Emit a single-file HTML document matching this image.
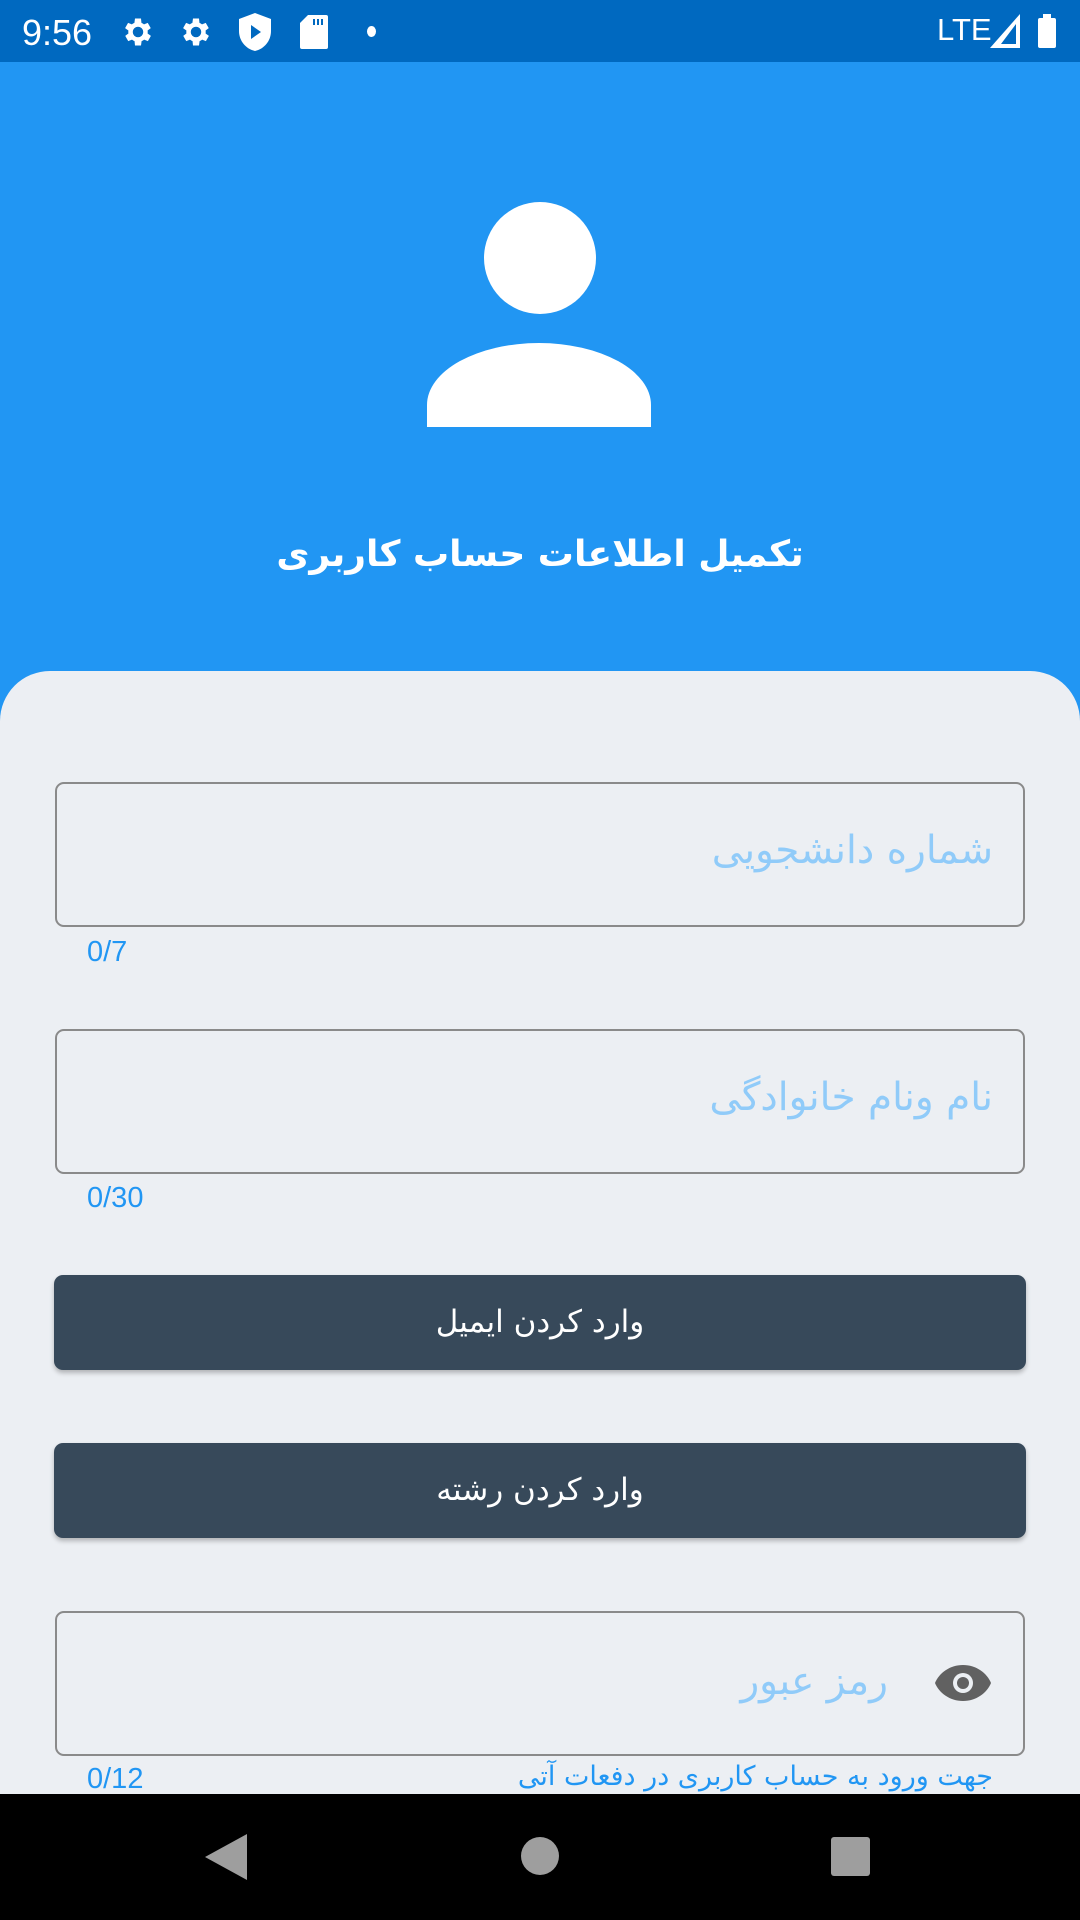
<!DOCTYPE html>
<html><head><meta charset="utf-8"><style>
*{margin:0;padding:0;box-sizing:border-box}
body{width:1080px;height:1920px;position:relative;overflow:hidden;background:#2196f3;font-family:"Liberation Sans","DejaVu Sans",sans-serif}
.abs{position:absolute}
.sb{left:0;top:0;width:1080px;height:62px;background:#0069c0;color:#fff}
.panel{left:0;top:671px;width:1080px;height:1123px;background:#eceff3;border-radius:50px 50px 0 0}
.field{left:55px;width:970px;height:145px;border:2.5px solid #8a8a8a;border-radius:9px}
.ph{right:30px;color:#90cbf9;font-size:39px;direction:rtl;font-family:"DejaVu Sans",sans-serif}
.cnt{left:87px;color:#2196f3;font-size:29px}
.btn{left:54px;width:972px;height:95px;background:#37495a;border-radius:9px;box-shadow:0 3px 5px rgba(0,0,0,.25);color:#fff;font-size:31px;text-align:center;line-height:95px;direction:rtl;font-family:"DejaVu Sans",sans-serif}
.nav{left:0;top:1794px;width:1080px;height:126px;background:#000}
</style></head><body>
<div class="abs sb">
<div class="abs" style="left:22px;top:12px;font-size:36px">9:56</div>
<svg class="abs" style="left:120px;top:14px" width="36" height="36" viewBox="0 0 24 24"><path fill="#fff" d="M19.4 13a7.5 7.5 0 0 0 0-2l2.1-1.6-2-3.5-2.5 1a7 7 0 0 0-1.7-1L15 3h-4l-.4 2.9a7 7 0 0 0-1.7 1l-2.5-1-2 3.5L6.6 11a7.5 7.5 0 0 0 0 2l-2.1 1.6 2 3.5 2.5-1a7 7 0 0 0 1.7 1L11 21h4l.4-2.9a7 7 0 0 0 1.7-1l2.5 1 2-3.5zM13 15.5a3.5 3.5 0 1 1 0-7 3.5 3.5 0 0 1 0 7z" transform="translate(-1 0)"/></svg>
<svg class="abs" style="left:178px;top:14px" width="36" height="36" viewBox="0 0 24 24"><path fill="#fff" d="M19.4 13a7.5 7.5 0 0 0 0-2l2.1-1.6-2-3.5-2.5 1a7 7 0 0 0-1.7-1L15 3h-4l-.4 2.9a7 7 0 0 0-1.7 1l-2.5-1-2 3.5L6.6 11a7.5 7.5 0 0 0 0 2l-2.1 1.6 2 3.5 2.5-1a7 7 0 0 0 1.7 1L11 21h4l.4-2.9a7 7 0 0 0 1.7-1l2.5 1 2-3.5zM13 15.5a3.5 3.5 0 1 1 0-7 3.5 3.5 0 0 1 0 7z" transform="translate(-1 0)"/></svg>
<svg class="abs" style="left:239px;top:13px" width="32" height="38" viewBox="0 0 16 19"><path fill="#fff" d="M8 0 0 3v6c0 5 3.5 9 8 10 4.5-1 8-5 8-10V3z"/><path fill="#0069c0" d="M6 6v7l5-3.5z"/></svg>
<svg class="abs" style="left:300px;top:15px" width="28" height="34" viewBox="0 0 14 17"><path fill="#fff" d="M4 0h9a1 1 0 0 1 1 1v15a1 1 0 0 1-1 1H1a1 1 0 0 1-1-1V4z"/><path stroke="#0069c0" stroke-width="1" d="M7 2v3M9 2v3M11 2v3"/></svg>
<div class="abs" style="left:367px;top:26px;width:9px;height:11px;border-radius:50%;background:#fff"></div>
<div class="abs" style="left:937px;top:12px;font-size:31px">LTE</div>
<svg class="abs" style="left:990px;top:14px" width="30" height="34" viewBox="0 0 30 34"><path fill="#fff" d="M30 0v34H0z"/><path fill="#0069c0" d="M26 10v20H11z"/></svg>
<div class="abs" style="left:1038px;top:18px;width:18px;height:30px;background:#fff;border-radius:2px"></div>
<div class="abs" style="left:1043px;top:14px;width:8px;height:5px;background:#fff"></div>
</div>
<div class="abs" style="left:484px;top:202px;width:112px;height:112px;border-radius:50%;background:#fff"></div>
<div class="abs" style="left:427px;top:343px;width:224px;height:84px;background:#fff;border-radius:112px 112px 0 0/62px 62px 0 0"></div>
<div class="abs" style="left:0;top:534px;width:1080px;text-align:center;color:#fff;font-size:36px;font-weight:bold;direction:rtl;font-family:'DejaVu Sans',sans-serif">تکمیل اطلاعات حساب کاربری</div>
<div class="abs panel"></div>
<div class="abs field" style="top:782px"></div>
<div class="abs ph" style="right:87px;top:828px">شماره دانشجویی</div>
<div class="abs cnt" style="top:936px">0/7</div>
<div class="abs field" style="top:1029px"></div>
<div class="abs ph" style="right:87px;top:1075px">نام ونام خانوادگی</div>
<div class="abs cnt" style="top:1182px">0/30</div>
<div class="abs btn" style="top:1275px">وارد کردن ایمیل</div>
<div class="abs btn" style="top:1443px">وارد کردن رشته</div>
<div class="abs field" style="top:1611px"></div>
<div class="abs ph" style="right:192px;top:1659px">رمز عبور</div>
<svg class="abs" style="left:934px;top:1663px" width="58" height="40" viewBox="0 0 58 40"><path fill="#616161" d="M29 2C16 2 5 10 1 20c4 10 15 18 28 18s24-8 28-18C53 10 42 2 29 2z"/><circle cx="29" cy="20" r="10" fill="#eceff3"/><circle cx="29" cy="20" r="6" fill="#616161"/></svg>
<div class="abs cnt" style="top:1763px">0/12</div>
<div class="abs" style="right:87px;top:1761px;color:#2196f3;font-size:27px;direction:rtl;font-family:'DejaVu Sans',sans-serif">جهت ورود به حساب کاربری در دفعات آتی</div>
<div class="abs nav">
<svg class="abs" style="left:205px;top:40px" width="42" height="46" viewBox="0 0 42 46"><path fill="#9e9e9e" d="M42 0v46L0 23z"/></svg>
<div class="abs" style="left:521px;top:43px;width:38px;height:38px;border-radius:50%;background:#9e9e9e"></div>
<div class="abs" style="left:831px;top:43px;width:39px;height:39px;background:#9e9e9e;border-radius:3px"></div>
</div>
</body></html>
